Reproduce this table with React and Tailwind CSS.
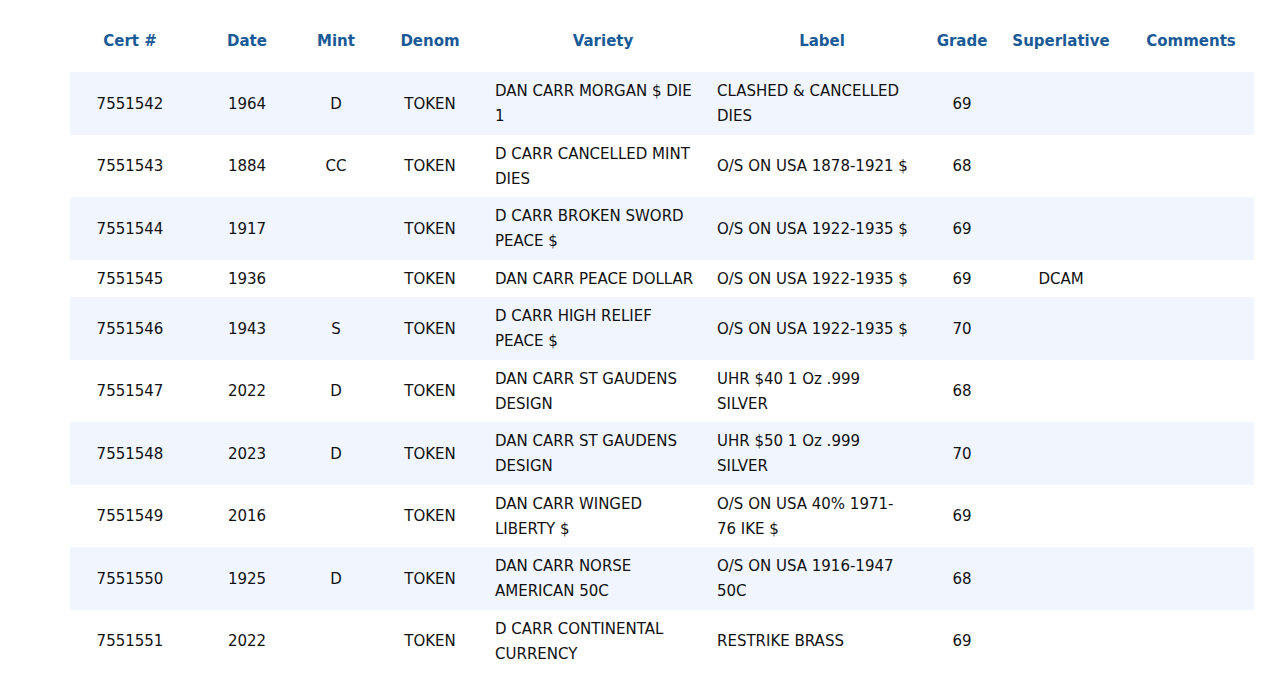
import React from 'react';

const columns = [
    { key: 'cert', label: 'Cert #', width: 'w-[120px]', align: 'text-center' },
    { key: 'date', label: 'Date', width: 'w-[114px]', align: 'text-center' },
    { key: 'mint', label: 'Mint', width: 'w-[64px]', align: 'text-center' },
    { key: 'denom', label: 'Denom', width: 'w-[124px]', align: 'text-center' },
    { key: 'variety', label: 'Variety', width: 'w-[222px]', align: 'text-left' },
    { key: 'label', label: 'Label', width: 'w-[216px]', align: 'text-left' },
    { key: 'grade', label: 'Grade', width: 'w-[64px]', align: 'text-center' },
    { key: 'superlative', label: 'Superlative', width: 'w-[134px]', align: 'text-center' },
    { key: 'comments', label: 'Comments', width: 'w-[126px]', align: 'text-center' },
];

// variety / label are split into display lines so wrapping matches
const rows = [
    { cert: '7551542', date: '1964', mint: 'D', denom: 'TOKEN', variety: ['DAN CARR MORGAN $ DIE', '1'], label: ['CLASHED & CANCELLED', 'DIES'], grade: '69', superlative: '' },
    { cert: '7551543', date: '1884', mint: 'CC', denom: 'TOKEN', variety: ['D CARR CANCELLED MINT', 'DIES'], label: ['O/S ON USA 1878-1921 $'], grade: '68', superlative: '' },
    { cert: '7551544', date: '1917', mint: '', denom: 'TOKEN', variety: ['D CARR BROKEN SWORD', 'PEACE $'], label: ['O/S ON USA 1922-1935 $'], grade: '69', superlative: '' },
    { cert: '7551545', date: '1936', mint: '', denom: 'TOKEN', variety: ['DAN CARR PEACE DOLLAR'], label: ['O/S ON USA 1922-1935 $'], grade: '69', superlative: 'DCAM' },
    { cert: '7551546', date: '1943', mint: 'S', denom: 'TOKEN', variety: ['D CARR HIGH RELIEF', 'PEACE $'], label: ['O/S ON USA 1922-1935 $'], grade: '70', superlative: '' },
    { cert: '7551547', date: '2022', mint: 'D', denom: 'TOKEN', variety: ['DAN CARR ST GAUDENS', 'DESIGN'], label: ['UHR $40 1 Oz .999', 'SILVER'], grade: '68', superlative: '' },
    { cert: '7551548', date: '2023', mint: 'D', denom: 'TOKEN', variety: ['DAN CARR ST GAUDENS', 'DESIGN'], label: ['UHR $50 1 Oz .999', 'SILVER'], grade: '70', superlative: '' },
    { cert: '7551549', date: '2016', mint: '', denom: 'TOKEN', variety: ['DAN CARR WINGED', 'LIBERTY $'], label: ['O/S ON USA 40% 1971-', '76 IKE $'], grade: '69', superlative: '' },
    { cert: '7551550', date: '1925', mint: 'D', denom: 'TOKEN', variety: ['DAN CARR NORSE', 'AMERICAN 50C'], label: ['O/S ON USA 1916-1947', '50C'], grade: '68', superlative: '' },
    { cert: '7551551', date: '2022', mint: '', denom: 'TOKEN', variety: ['D CARR CONTINENTAL', 'CURRENCY'], label: ['RESTRIKE BRASS'], grade: '69', superlative: '' },
];

const Lines = ({ lines }) => (
    <>
        {lines.map((line, i) => (
            <span key={i} className="block whitespace-nowrap">{line}</span>
        ))}
    </>
);

const App = () => {
    return (
        <div className="min-h-screen bg-white font-['DejaVu_Sans',Verdana,sans-serif] text-[15px] text-[#111]">
            <table className="ml-[70px] w-[1184px] table-fixed border-collapse">
                <colgroup>
                    {columns.map((col) => (
                        <col key={col.key} className={col.width} />
                    ))}
                </colgroup>
                <thead>
                    <tr>
                        {columns.map((col) => (
                            <th
                                key={col.key}
                                className="px-[3px] pt-[29px] pb-[18px] text-center font-bold leading-[25px] text-[#1a5a96]"
                            >
                                {col.label}
                            </th>
                        ))}
                    </tr>
                </thead>
                <tbody>
                    {rows.map((row, idx) => (
                        <tr key={row.cert} className={idx % 2 === 0 ? 'bg-[#f0f5fe]' : 'bg-white'}>
                            <td className="px-[3px] pt-[7px] pb-[5.5px] text-center leading-[25px]">{row.cert}</td>
                            <td className="px-[3px] pt-[7px] pb-[5.5px] text-center leading-[25px]">{row.date}</td>
                            <td className="px-[3px] pt-[7px] pb-[5.5px] text-center leading-[25px]">{row.mint}</td>
                            <td className="px-[3px] pt-[7px] pb-[5.5px] text-center leading-[25px]">{row.denom}</td>
                            <td className="px-[3px] pt-[7px] pb-[5.5px] text-left leading-[25px]">
                                <Lines lines={row.variety} />
                            </td>
                            <td className="px-[3px] pt-[7px] pb-[5.5px] text-left leading-[25px]">
                                <Lines lines={row.label} />
                            </td>
                            <td className="px-[3px] pt-[7px] pb-[5.5px] text-center leading-[25px]">{row.grade}</td>
                            <td className="px-[3px] pt-[7px] pb-[5.5px] text-center leading-[25px]">{row.superlative}</td>
                            <td className="px-[3px] pt-[7px] pb-[5.5px] text-center leading-[25px]"></td>
                        </tr>
                    ))}
                </tbody>
            </table>
        </div>
    );
};

export default App;
